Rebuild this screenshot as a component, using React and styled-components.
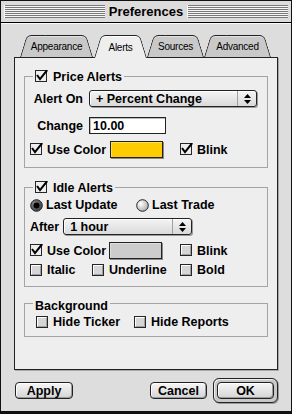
import React from "react";
import styled, { createGlobalStyle } from "styled-components";

const GlobalStyle = createGlobalStyle`
  html, body {
    margin: 0;
    padding: 0;
    background: #dddddd;
  }
  body {
    font-family: "Liberation Sans", Arial, sans-serif;
    color: #000;
  }
`;

const Window = styled.div`
  width: 292px;
  height: 414px;
  box-sizing: border-box;
  border: 1px solid #111;
  border-bottom-width: 3px;
  background: #dddddd;
  display: flex;
  flex-direction: column;
`;

const TitleBar = styled.div`
  height: 21px;
  flex: none;
  display: flex;
  align-items: center;
  padding: 0 3px;
  border-bottom: 1px solid #000;
  background: #dcdcdc;
`;

const Stripes = styled.div`
  flex: 1;
  height: 13px;
  background: repeating-linear-gradient(to bottom, #7a7a7a 0 1px, #f6f6f6 1px 2px);
  box-shadow: inset 1px 0 0 #f6f6f6;
`;

const Title = styled.div`
  padding: 0 4px;
  font-weight: bold;
  font-size: 13px;
  line-height: 21px;
`;

const Content = styled.div`
  flex: 1;
  display: flex;
  flex-direction: column;
  padding: 11px 13px 0;
  border-top: 1px solid #fafafa;
`;

const TabStrip = styled.div`
  display: flex;
  align-items: flex-end;
  height: 22px;
  padding-left: 6px;
`;

const Tab = styled.div`
  position: relative;
  z-index: ${({ $active }) => ($active ? 3 : 2)};
  width: ${({ $w }) => $w}px;
  height: ${({ $active }) => ($active ? 23 : 22)}px;
  margin-bottom: ${({ $active }) => ($active ? "-1px" : "0")};
  margin-left: ${({ $ml }) => $ml || 0}px;
  box-sizing: border-box;
  padding-top: ${({ $active }) => ($active ? 2 : 1)}px;
  display: flex;
  align-items: center;
  justify-content: center;
  font-size: 10px;
  letter-spacing: -0.25px;

  &::before,
  &::after {
    content: "";
    position: absolute;
    top: 0;
    bottom: 0;
    width: 56%;
    z-index: -1;
    box-sizing: border-box;
    border: 1px solid #222;
    border-bottom: none;
    background: ${({ $active }) => ($active ? "#eeeeee" : "#c9c9c9")};
    box-shadow: inset 0 1px 0 ${({ $active }) => ($active ? "#fff" : "#e4e4e4")};
    transform-origin: bottom;
  }
  &::before {
    left: 0;
    border-right: none;
    border-top-left-radius: 5px;
    transform: skewX(-17deg);
  }
  &::after {
    right: 0;
    border-left: none;
    border-top-right-radius: 5px;
    transform: skewX(17deg);
  }
`;

const Panel = styled.div`
  height: 313px;
  flex: none;
  box-sizing: border-box;
  border: 1px solid #222;
  background: #eeeeee;
  box-shadow: 1px 1px 0 #a8a8a8;
  padding: 11px 9px 0;
`;

const Group = styled.fieldset`
  margin: ${({ $mt }) => $mt || 0}px 0 0;
  padding: 0 5px ${({ $pb }) => $pb}px;
  border: 1px solid #a4a4a4;
  min-width: 0;
`;

const Legend = styled.legend`
  margin-left: 3px;
  padding: 0 2px;
  height: 14px;
`;

const LegendInner = styled.span`
  display: inline-flex;
  align-items: center;
  gap: 4px;
  height: 14px;
  font-weight: bold;
  font-size: 12.5px;
`;

const Row = styled.div`
  display: flex;
  align-items: center;
  height: ${({ $h }) => $h || 17}px;
  margin-top: ${({ $mt }) => $mt || 0}px;
  padding-left: ${({ $pl }) => $pl || 0}px;
`;

const Label = styled.span`
  font-weight: bold;
  font-size: 12.5px;
  white-space: nowrap;
  width: ${({ $w }) => ($w ? `${$w}px` : "auto")};
  text-align: ${({ $right }) => ($right ? "right" : "left")};
  margin-right: ${({ $mr }) => $mr || 0}px;
`;

const Item = styled.label`
  display: flex;
  align-items: center;
  gap: 3px;
  flex: none;
  width: ${({ $w }) => ($w ? `${$w}px` : "auto")};
  margin-left: ${({ $ml }) => $ml || 0}px;
`;

const Popup = styled.div`
  width: ${({ $w }) => $w}px;
  height: 17px;
  box-sizing: border-box;
  border: 1px solid #222;
  border-radius: 3px;
  background: linear-gradient(#f4f4f4, #dadada);
  box-shadow: 1px 1px 0 #9a9a9a, inset 1px 1px 0 #fff;
  display: flex;
  align-items: center;
`;

const PopupText = styled.span`
  flex: 1;
  padding-left: 6px;
  font-weight: bold;
  font-size: 12.5px;
  white-space: nowrap;
`;

const PopupArrows = styled.span`
  width: 19px;
  height: 100%;
  box-sizing: border-box;
  border-left: 1px solid #a0a0a0;
  display: flex;
  align-items: center;
  justify-content: center;
`;

const TextField = styled.div`
  width: 77px;
  height: 17px;
  box-sizing: border-box;
  border: 1px solid #222;
  background: #fff;
  box-shadow: inset 1px 1px 0 #bbb;
  padding-left: 3px;
  display: flex;
  align-items: center;
  font-weight: bold;
  font-size: 12.5px;
`;

const Swatch = styled.div`
  width: 53px;
  height: 17px;
  flex: none;
  box-sizing: border-box;
  border: 1px solid #222;
  background: ${({ $color }) => $color};
  box-shadow: 1px 1px 0 #8a8a8a, inset 1px 1px 0 rgba(255, 255, 255, 0.35);
`;

const ButtonRow = styled.div`
  display: flex;
  align-items: center;
  justify-content: space-between;
  height: 25px;
  margin-top: 8px;
  padding-left: 1px;
`;

const RightButtons = styled.div`
  display: flex;
  align-items: center;
  gap: 6px;
`;

const Button = styled.button`
  width: ${({ $w }) => $w}px;
  height: 17px;
  padding: 0;
  border: 1px solid #222;
  border-radius: 4px;
  background: linear-gradient(#f6f6f6, #d4d4d4);
  box-shadow: inset -1px -1px 0 #9c9c9c, inset 1px 1px 0 #fff;
  font-family: "Liberation Sans", Arial, sans-serif;
  font-weight: bold;
  font-size: 12.5px;
  color: #000;
`;

const DefaultRing = styled.div`
  padding: 3px;
  border: 1px solid #222;
  border-radius: 6px;
  background: #c8c8c8;
  box-shadow: inset 1px 1px 0 #eee, 1px 1px 0 #999;
  display: flex;
`;

function CheckBox({ checked }) {
  return (
    <svg width="14" height="13" viewBox="0 0 14 13" style={{ flex: "none" }}>
      <rect x="0.5" y="0.5" width="11" height="11" fill={checked ? "#eeeeee" : "#d6d6d6"} stroke="#262626" />
      {!checked && <path d="M1.5 10V1.5H10" stroke="#fff" fill="none" />}
      {!checked && <path d="M2 10.5H10.5V2" stroke="#a0a0a0" fill="none" />}
      {checked && (
        <path d="M2.6 5.8L5 9.2L11.6 0.8" stroke="#000" strokeWidth="2" fill="none" strokeLinecap="square" />
      )}
    </svg>
  );
}

function Radio({ on }) {
  return (
    <svg width="13" height="13" viewBox="0 0 13 13" style={{ flex: "none" }}>
      <defs>
        <radialGradient id={on ? "rOn" : "rOff"} cx="0.35" cy="0.35" r="0.75">
          <stop offset="0" stopColor={on ? "#8a8a8a" : "#ffffff"} />
          <stop offset="1" stopColor={on ? "#3a3a3a" : "#a8a8a8"} />
        </radialGradient>
      </defs>
      <circle cx="6.5" cy="6.5" r="5.8" fill={`url(#${on ? "rOn" : "rOff"})`} stroke="#222" />
      {on && <circle cx="6.5" cy="6.5" r="3" fill="#000" />}
    </svg>
  );
}

function Arrows() {
  return (
    <svg width="7" height="10" viewBox="0 0 7 10">
      <path d="M3.5 0L7 4H0Z" fill="#000" />
      <path d="M3.5 10L7 6H0Z" fill="#000" />
    </svg>
  );
}

function Check({ checked, label, w, ml }) {
  return (
    <Item $w={w} $ml={ml}>
      <CheckBox checked={checked} />
      <Label>{label}</Label>
    </Item>
  );
}

const tabs = [
  { name: "Appearance", w: 73 },
  { name: "Alerts", w: 53, ml: 1, active: true },
  { name: "Sources", w: 57 },
  { name: "Advanced", w: 67 },
];

export default function App() {
  return (
    <>
      <GlobalStyle />
      <Window>
        <TitleBar>
          <Stripes />
          <Title>Preferences</Title>
          <Stripes />
        </TitleBar>
        <Content>
          <TabStrip>
            {tabs.map((t) => (
              <Tab key={t.name} $w={t.w} $ml={t.ml} $active={t.active}>
                {t.name}
              </Tab>
            ))}
          </TabStrip>
          <Panel>
            <Group $pb={9}>
              <Legend>
                <LegendInner>
                  <CheckBox checked />
                  Price Alerts
                </LegendInner>
              </Legend>
              <Row $mt={7}>
                <Label $w={53} $right $mr={6}>Alert On</Label>
                <Popup $w={168}>
                  <PopupText>+ Percent Change</PopupText>
                  <PopupArrows><Arrows /></PopupArrows>
                </Popup>
              </Row>
              <Row $mt={10}>
                <Label $w={53} $right $mr={6}>Change</Label>
                <TextField>10.00</TextField>
              </Row>
              <Row $mt={7}>
                <Check checked label="Use Color" w={80} />
                <Swatch $color="#ffcc00" />
                <Check checked label="Blink" ml={17} />
              </Row>
            </Group>

            <Group $mt={12} $pb={9}>
              <Legend>
                <LegendInner>
                  <CheckBox checked />
                  Idle Alerts
                </LegendInner>
              </Legend>
              <Row $mt={4} $h={14}>
                <Item $w={106}>
                  <Radio on />
                  <Label>Last Update</Label>
                </Item>
                <Item>
                  <Radio />
                  <Label>Last Trade</Label>
                </Item>
              </Row>
              <Row $mt={6}>
                <Label $mr={4}>After</Label>
                <Popup $w={129}>
                  <PopupText>1 hour</PopupText>
                  <PopupArrows><Arrows /></PopupArrows>
                </Popup>
              </Row>
              <Row $mt={7}>
                <Check checked label="Use Color" w={79} />
                <Swatch $color="#cccccc" />
                <Check label="Blink" ml={18} />
              </Row>
              <Row $mt={4} $h={14}>
                <Check label="Italic" w={62} />
                <Check label="Underline" w={88} />
                <Check label="Bold" />
              </Row>
            </Group>

            <Group $mt={9} $pb={7}>
              <Legend>
                <LegendInner>Background</LegendInner>
              </Legend>
              <Row $mt={5} $h={14} $pl={6}>
                <Check label="Hide Ticker" w={98} />
                <Check label="Hide Reports" />
              </Row>
            </Group>
          </Panel>
          <ButtonRow>
            <Button $w={58}>Apply</Button>
            <RightButtons>
              <Button $w={57}>Cancel</Button>
              <DefaultRing>
                <Button $w={57}>OK</Button>
              </DefaultRing>
            </RightButtons>
          </ButtonRow>
        </Content>
      </Window>
    </>
  );
}
